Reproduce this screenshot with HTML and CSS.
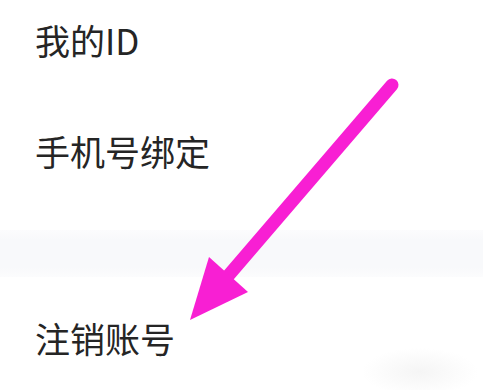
FILE: index.html
```html
<!doctype html>
<html>
  <head>
    <meta charset="utf-8">
    <link rel="stylesheet" href="styles.css">
  </head>
  <body>
    <div class="settings">
      <div class="group group-top">
        <div class="item">我的ID</div>
        <div class="item">手机号绑定</div>
      </div>
      <div class="divider"></div>
      <div class="group group-bottom">
        <div class="item">注销账号</div>
      </div>
      <svg class="pointer" width="483" height="390" viewBox="0 0 483 390">
        <line x1="392" y1="85" x2="222" y2="283" stroke="#f81fd3" stroke-width="13" stroke-linecap="round"/>
        <polygon points="209,257 248,292 190,320" fill="#f81fd3"/>
      </svg>
    </div>
  </body>
</html>
```

FILE: styles.css
```css
html, body {
  margin: 0;
  padding: 0;
  background: #fff;
}

.settings {
  position: relative;
  width: 483px;
  height: 390px;
  overflow: hidden;
  font-family: "Noto Sans CJK SC", "Noto Sans", sans-serif;
  font-size: 35px;
  line-height: 34px;
  color: #252525;
}

.group {
  display: flex;
  flex-direction: column;
  padding: 0 35px;
}

.group-top {
  gap: 77px;
  padding-top: 23px;
  padding-bottom: 62px;
}

.group-bottom {
  padding-top: 44px;
  height: 69px;
  background: radial-gradient(ellipse 58px 24px at 420px 95px, #f5f5f5, rgba(255, 255, 255, 0));
}

.divider {
  height: 47px;
  background: linear-gradient(#fcfcfd, #f8f9fb 20%, #f8f9fb 80%, #fcfcfd);
}

.pointer {
  position: absolute;
  top: 0;
  left: 0;
}
```
